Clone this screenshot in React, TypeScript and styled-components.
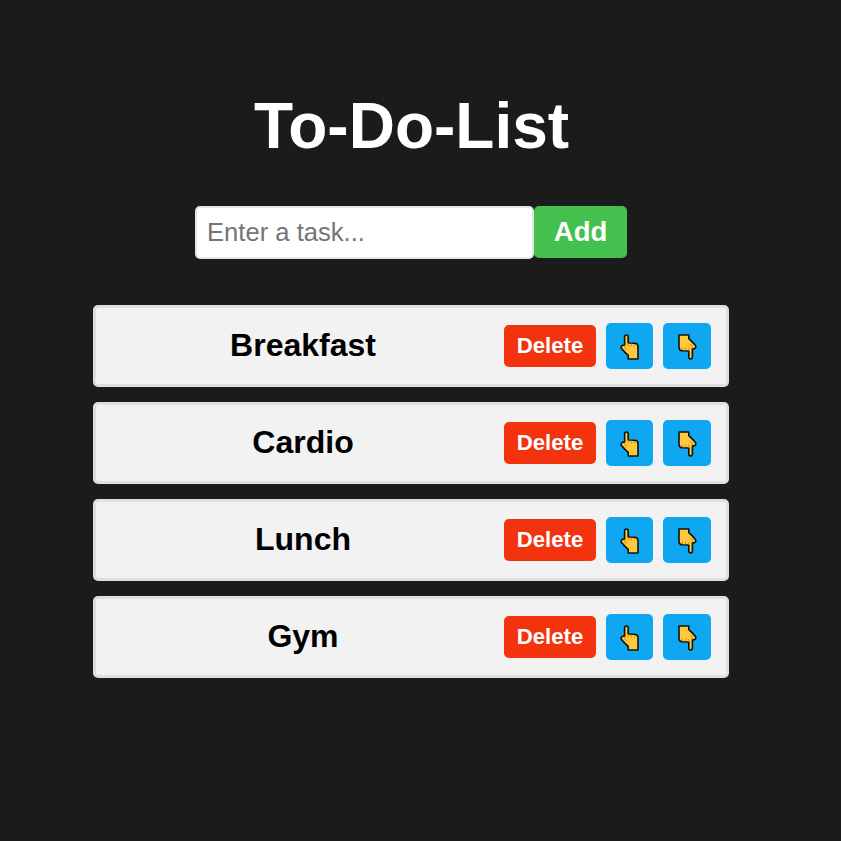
import React, { useState } from "react";
import styled, { createGlobalStyle } from "styled-components";

const GlobalStyle = createGlobalStyle`
  * { box-sizing: border-box; }
  body {
    margin: 0;
    background: #1b1b1b;
    font-family: Arial, "Liberation Sans", sans-serif;
  }
`;

const Page = styled.main`
  display: flex;
  flex-direction: column;
  align-items: center;
  width: 636px;
  margin-left: 93px;
  padding-top: 90px;
`;

const Title = styled.h1`
  margin: 0 0 43px;
  padding-left: 1px;
  color: #fff;
  font-size: 64px;
  line-height: 73px;
`;

const EntryRow = styled.div`
  display: flex;
  align-items: flex-start;
`;

const TaskInput = styled.input`
  width: 339px;
  height: 53px;
  padding: 0 10px;
  border: 2px solid #e4e4e4;
  border-radius: 5px;
  background: #fff;
  font-family: inherit;
  font-size: 25.6px;
  &::placeholder { color: #757575; }
`;

const Button = styled.button`
  display: flex;
  align-items: center;
  justify-content: center;
  padding: 0;
  border: none;
  border-radius: 5px;
  color: #fff;
  font-family: inherit;
  font-weight: bold;
  cursor: pointer;
`;

const AddButton = styled(Button)`
  width: 93px;
  height: 52px;
  background: #43c04d;
  font-size: 27.5px;
`;

const TaskList = styled.ol`
  display: flex;
  flex-direction: column;
  gap: 15px;
  width: 100%;
  margin: 46px 0 0;
  padding: 0;
  list-style: none;
`;

const TaskItem = styled.li`
  display: flex;
  align-items: center;
  height: 82px;
  padding: 0 15px;
  border: 3px solid #dfdfdf;
  border-radius: 5px;
  background: #f2f2f2;
`;

const TaskName = styled.span`
  flex: 1;
  padding: 0 9px 2px 0;
  color: #000;
  font-size: 32px;
  font-weight: bold;
  text-align: center;
`;

const DeleteButton = styled(Button)`
  width: 92px;
  height: 42px;
  margin-right: 10px;
  background: #f3330e;
  font-size: 22.2px;
`;

const MoveButton = styled(Button)<{ $wide?: boolean }>`
  width: ${(p) => (p.$wide ? 48 : 47)}px;
  height: 46px;
  margin-left: ${(p) => (p.$wide ? 10 : 0)}px;
  padding-top: 2px;
  background: #0fa6f2;
`;

const HandIcon = styled.svg<{ $down?: boolean }>`
  display: block;
  transform: ${(p) => (p.$down ? "rotate(180deg)" : "none")};
`;

function Hand({ down }: { down?: boolean }) {
  return (
    <HandIcon $down={down} width="19" height="26" viewBox="0 0 19 26" aria-hidden="true">
      <path
        d="M4.6 11V2.9Q4.6 1 6.4 1Q8.2 1 8.2 2.9V9L15 9.2Q18 9.6 18 12.5V25H8.2V21.4L5 18.4L1.3 14.2Q.7 12.3 2.4 11.4Z"
        fill="#ffc83d"
        stroke="#111"
        strokeWidth="1.6"
        strokeLinejoin="round"
      />
      <path d="M8.2 9V12.2M11.4 9.6V12.4M14.6 10V12.6" fill="none" stroke="#d67d00" strokeWidth=".8" />
      <path d="M4.8 11.8V14.2L7 15.8" fill="none" stroke="#d67d00" strokeWidth=".8" />
    </HandIcon>
  );
}

export default function App() {
  const [tasks, setTasks] = useState(["Breakfast", "Cardio", "Lunch", "Gym"]);
  const [draft, setDraft] = useState("");

  const addTask = () => {
    if (!draft.trim()) return;
    setTasks([...tasks, draft.trim()]);
    setDraft("");
  };

  const move = (from: number, to: number) => {
    if (to < 0 || to >= tasks.length) return;
    const next = [...tasks];
    [next[from], next[to]] = [next[to], next[from]];
    setTasks(next);
  };

  return (
    <>
      <GlobalStyle />
      <Page>
        <Title>To-Do-List</Title>
        <EntryRow>
          <TaskInput
            placeholder="Enter a task..."
            value={draft}
            onChange={(e) => setDraft(e.target.value)}
          />
          <AddButton onClick={addTask}>Add</AddButton>
        </EntryRow>
        <TaskList>
          {tasks.map((task, i) => (
            <TaskItem key={i}>
              <TaskName>{task}</TaskName>
              <DeleteButton onClick={() => setTasks(tasks.filter((_, n) => n !== i))}>
                Delete
              </DeleteButton>
              <MoveButton aria-label="Move up" onClick={() => move(i, i - 1)}>
                <Hand />
              </MoveButton>
              <MoveButton $wide aria-label="Move down" onClick={() => move(i, i + 1)}>
                <Hand down />
              </MoveButton>
            </TaskItem>
          ))}
        </TaskList>
      </Page>
    </>
  );
}
